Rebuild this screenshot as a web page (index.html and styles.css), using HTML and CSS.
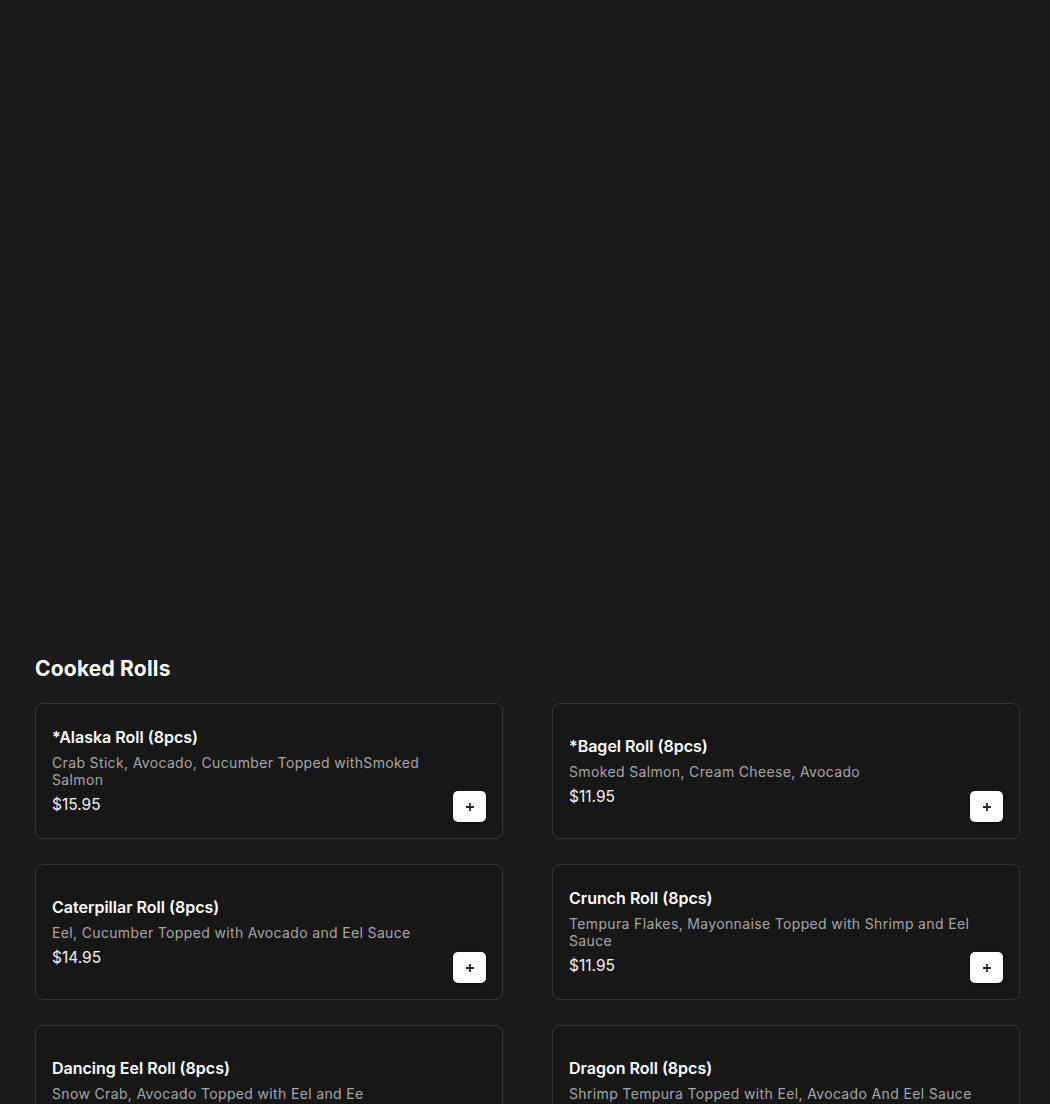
FILE: index.html
```html
<!DOCTYPE html>
<html lang="en">
<head>
<meta charset="utf-8">
<title>Cooked Rolls</title>
<link rel="stylesheet" href="styles.css">
</head>
<body>
<main class="page">
  <div class="hero-space"></div>
  <section class="section">
    <h2 class="section-title">Cooked Rolls</h2>
    <div class="grid">
      <article class="card">
        <div class="info">
          <h3 class="name">*Alaska Roll (8pcs)</h3>
          <p class="desc">Crab Stick, Avocado, Cucumber Topped withSmoked Salmon</p>
          <p class="price">$15.95</p>
        </div>
        <button class="add" aria-label="Add"><svg viewBox="0 0 10 10" width="10" height="10"><path d="M5 1v8M1 5h8" stroke="#2a2a2a" stroke-width="1.8" fill="none"/></svg></button>
      </article>
      <article class="card">
        <div class="info">
          <h3 class="name">*Bagel Roll (8pcs)</h3>
          <p class="desc">Smoked Salmon, Cream Cheese, Avocado</p>
          <p class="price">$11.95</p>
        </div>
        <button class="add" aria-label="Add"><svg viewBox="0 0 10 10" width="10" height="10"><path d="M5 1v8M1 5h8" stroke="#2a2a2a" stroke-width="1.8" fill="none"/></svg></button>
      </article>
      <article class="card">
        <div class="info">
          <h3 class="name">Caterpillar Roll (8pcs)</h3>
          <p class="desc">Eel, Cucumber Topped with Avocado and Eel Sauce</p>
          <p class="price">$14.95</p>
        </div>
        <button class="add" aria-label="Add"><svg viewBox="0 0 10 10" width="10" height="10"><path d="M5 1v8M1 5h8" stroke="#2a2a2a" stroke-width="1.8" fill="none"/></svg></button>
      </article>
      <article class="card">
        <div class="info">
          <h3 class="name">Crunch Roll (8pcs)</h3>
          <p class="desc">Tempura Flakes, Mayonnaise Topped with Shrimp and Eel Sauce</p>
          <p class="price">$11.95</p>
        </div>
        <button class="add" aria-label="Add"><svg viewBox="0 0 10 10" width="10" height="10"><path d="M5 1v8M1 5h8" stroke="#2a2a2a" stroke-width="1.8" fill="none"/></svg></button>
      </article>
      <article class="card">
        <div class="info">
          <h3 class="name">Dancing Eel Roll (8pcs)</h3>
          <p class="desc">Snow Crab, Avocado Topped with Eel and Ee</p>
          <p class="price">$15.95</p>
        </div>
        <button class="add" aria-label="Add"><svg viewBox="0 0 10 10" width="10" height="10"><path d="M5 1v8M1 5h8" stroke="#2a2a2a" stroke-width="1.8" fill="none"/></svg></button>
      </article>
      <article class="card">
        <div class="info">
          <h3 class="name">Dragon Roll (8pcs)</h3>
          <p class="desc">Shrimp Tempura Topped with Eel, Avocado And Eel Sauce</p>
          <p class="price">$15.95</p>
        </div>
        <button class="add" aria-label="Add"><svg viewBox="0 0 10 10" width="10" height="10"><path d="M5 1v8M1 5h8" stroke="#2a2a2a" stroke-width="1.8" fill="none"/></svg></button>
      </article>
    </div>
  </section>
</main>
</body>
</html>
```
FILE: styles.css
```css
* { box-sizing: border-box; }
html, body {
  margin: 0;
  padding: 0;
  background: #1b1b1b;
}
body {
  font-family: Inter, "Noto Sans", "Liberation Sans", sans-serif;
  color: #ffffff;
}
.page {
  width: 985px;
  margin-left: 35px;
}
.hero-space {
  height: 655px;
}
.section-title {
  margin: 0 0 20px 0;
  font-size: 21px;
  line-height: 28px;
  font-weight: 700;
  letter-spacing: 0.2px;
  color: #ffffff;
}
.grid {
  display: grid;
  grid-template-columns: 468px 468px;
  column-gap: 49px;
  row-gap: 25px;
}
.card {
  display: grid;
  grid-template-areas: "stack";
  height: 136px;
  padding: 16px;
  background: #171717;
  border: 1px solid #363636;
  border-radius: 8px;
}
.info {
  grid-area: stack;
  align-self: center;
  display: flex;
  flex-direction: column;
  gap: 7px;
  max-width: 414px;
}
.name {
  margin: 0;
  font-size: 16px;
  line-height: 20px;
  font-weight: 600;
  color: #ffffff;
}
.desc {
  margin: 0;
  font-size: 14px;
  line-height: 17px;
  color: #a6a6a6;
  letter-spacing: 0.35px;
}
.price {
  margin: 0;
  font-size: 15.5px;
  line-height: 20px;
  font-weight: 400;
  color: #f2f2f2;
}
.add {
  grid-area: stack;
  align-self: end;
  justify-self: end;
  width: 33px;
  height: 31px;
  border: none;
  border-radius: 5px;
  background: #ffffff;
  padding: 0;
  display: flex;
  align-items: center;
  justify-content: center;
  box-shadow: 0 1px 3px rgba(0,0,0,0.5);
  cursor: pointer;
}
```
